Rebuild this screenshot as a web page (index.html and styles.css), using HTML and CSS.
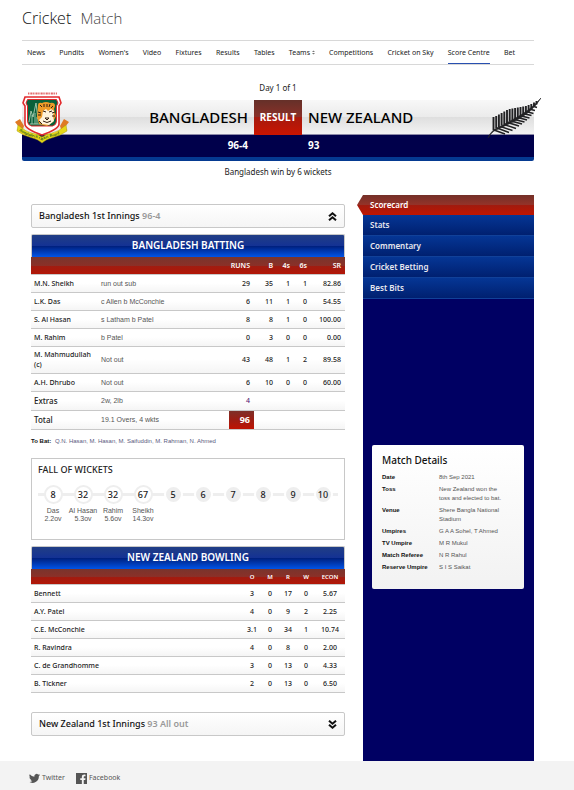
FILE: index.html
```html
<!DOCTYPE html>
<html lang="en">
<head>
<meta charset="utf-8">
<meta name="viewport" content="width=device-width, initial-scale=1">
<title>Cricket Match</title>
<link rel="stylesheet" href="styles.css">
</head>
<body>
<div class="page">
  <header class="site-head">
    <h1 class="site-title">Cricket <span>Match</span></h1>
    <nav class="site-nav" aria-label="Cricket">
      <a href="#">News</a>
      <a href="#">Pundits</a>
      <a href="#">Women's</a>
      <a href="#">Video</a>
      <a href="#">Fixtures</a>
      <a href="#">Results</a>
      <a href="#">Tables</a>
      <a href="#">Teams <svg class="caret" viewBox="0 0 4 6" aria-hidden="true"><path d="M0 2.4 2 .2 4 2.4ZM0 3.6 2 5.8 4 3.6Z"/></svg></a>
      <a href="#">Competitions</a>
      <a href="#">Cricket on Sky</a>
      <a href="#" class="current" aria-current="page">Score Centre</a>
      <a href="#">Bet</a>
    </nav>
  </header>

  <section class="match">
    <p class="match-day">Day 1 of 1</p>
    <div class="board">
      <div class="teams">
        <h2 class="team home">BANGLADESH</h2>
        <div class="result">RESULT</div>
        <h2 class="team away">NEW ZEALAND</h2>
      </div>
      <div class="scores">
        <strong class="home">96-4</strong>
        <strong class="away">93</strong>
      </div>
      <svg class="crest" viewBox="0 0 54 54" aria-hidden="true">
        <path d="M13 2.500h29" stroke="#e36a6a" stroke-width="2" stroke-dasharray="1.4 .9 2.2 .6"/>
        <path d="M0 31 5 28 9 35 7 41 2 39 4 36ZM54 31 49 28 45 35 47 41 52 39 50 36Z" fill="#df7a25"/>
        <path d="M10 6h34l2 6-2 3v18q0 5-17 11-17-6-17-11v-18l-2-3Z" fill="#fff" stroke="#e2292c" stroke-width="1.600"/>
        <path d="M12.500 8.500h29l1.500 3.500-1.500 3v15q0 4-4 5H16.500q-4-1-4-5V15l-1.500-3Z" fill="#08603a" stroke="#e2292c" stroke-width="1"/>
        <path d="M14 31 16 20 18 26 21 12 23 28 25 20 26 33M17 33v-9M20 33V22M22 33v-7M15 33h13" fill="none" stroke="#a9cdb4" stroke-width=".9"/>
        <path d="M23 14q0-3 4-2 4-2 8 0 5-1 5 3l-1 3 2 7-3 6-6 4-8-2-2-7Z" fill="#ec9a28"/>
        <path d="m28 20 3-2 2 2 3-2 3 2-1 5 1 5-5 4-7-1-3-4 3-3Z" fill="#fff3da"/>
        <path d="m25 14 2 2m2-3v3m3-3v3m3-3-1 3m4-1-2 2M23 21l3 1m-3 2h3m14-3-3 1m3 3h-3M28 20l3 1m3 0 3-1M30 27h4l-2 2ZM28 30q4 3 8 0M24 30l3 3" fill="none" stroke="#342014" stroke-width="1"/>
        <path d="M3 34q8 7 14 8 6 1 10 4 4-3 10-4 6-1 14-8l1 6q-7 5-14 6.500-7 1.500-11 5.500-4-4-11-5.500-7-1.500-14-6.500Z" fill="#e7d817" stroke="#a79a13" stroke-width=".5"/>
        <path id="ribbon" d="M4 39.500q7 5 13 6 6 1.500 10 4 4-2.500 10-4 6-1 13-6" fill="none"/>
        <text class="crest-text"><textPath href="#ribbon">Bangladesh Cricket Board</textPath></text>
      </svg>
      <svg class="fern" viewBox="0 0 54 42" aria-hidden="true">
        <path d="M6.500 33V20M9.200 31.500V19M11.900 30V17.500M14.600 28.500V16M17.300 27V14.500M20 26V13M22.700 24.500V12M25.400 23V11.500M28.100 22V11M30.800 20.500V10.500M33.500 19V10M36.200 18V9.500M38.900 16.500V9M41.600 14.500V8M44.300 12.500V7M47 10V5.500M49.500 7.500V4" stroke="#222224" stroke-width="1.900"/>
        <path d="M7 33l11 4M10 31l12 4.500M13.500 29.500l12 4M17 27.500l12 4M20.500 25.500l11.500 3.500M24 24l11 3M27.500 22.500l10 2.500M31 20.500l9 2.500M34.500 19l8 2M38 17l6.500 1.500M41 15l5.500 1.500M44 12.500l4 1M47 9.500l3 1" stroke="#222224" stroke-width="1.500"/>
        <path d="M1 41Q3 36 6.500 33L25 23Q44 13 54 1 45 16 26 25L7 34Q4 36 1 41Z" fill="#222224" stroke="#222224" stroke-width=".6"/>
      </svg>
    </div>
    <p class="outcome">Bangladesh win by 6 wickets</p>
  </section>

  <div class="columns">
    <main class="scorecard">
      <button class="innings" type="button" aria-expanded="true">
        <span>Bangladesh 1st Innings <em>96-4</em></span>
        <svg viewBox="0 0 9 9" aria-hidden="true"><path d="m1 4.300 3.500-3L8 4.300M1 8.300l3.500-3L8 8.300"/></svg>
      </button>

      <table class="stats batting">
        <caption>BANGLADESH BATTING</caption>
        <colgroup><col class="c-name"><col><col class="c-runs"><col class="c-balls"><col class="c-four"><col class="c-four"><col class="c-rate"></colgroup>
        <thead>
          <tr><th></th><th></th><th scope="col">RUNS</th><th scope="col">B</th><th scope="col">4s</th><th scope="col">6s</th><th scope="col">SR</th></tr>
        </thead>
        <tbody>
          <tr><th scope="row">M.N. Sheikh</th><td class="how">run out sub</td><td>29</td><td>35</td><td>1</td><td>1</td><td>82.86</td></tr>
          <tr><th scope="row">L.K. Das</th><td class="how">c Allen b McConchie</td><td>6</td><td>11</td><td>1</td><td>0</td><td>54.55</td></tr>
          <tr><th scope="row">S. Al Hasan</th><td class="how">s Latham b Patel</td><td>8</td><td>8</td><td>1</td><td>0</td><td>100.00</td></tr>
          <tr><th scope="row">M. Rahim</th><td class="how">b Patel</td><td>0</td><td>3</td><td>0</td><td>0</td><td>0.00</td></tr>
          <tr><th scope="row">M. Mahmudullah (c)</th><td class="how">Not out</td><td>43</td><td>48</td><td>1</td><td>2</td><td>89.58</td></tr>
          <tr><th scope="row">A.H. Dhrubo</th><td class="how">Not out</td><td>6</td><td>10</td><td>0</td><td>0</td><td>60.00</td></tr>
        </tbody>
        <tfoot>
          <tr><th scope="row">Extras</th><td class="how">2w, 2lb</td><td class="extras">4</td><td colspan="4"></td></tr>
          <tr><th scope="row">Total</th><td class="how">19.1 Overs, 4 wkts</td><td class="total">96</td><td colspan="4"></td></tr>
        </tfoot>
      </table>

      <p class="to-bat"><b>To Bat:</b> Q.N. Hasan, M. Hasan, M. Saifuddin, M. Rahman, N. Ahmed</p>

      <section class="wickets">
        <h3>FALL OF WICKETS</h3>
        <ol>
          <li class="fallen"><b>8</b><span>Das<br>2.2ov</span></li>
          <li class="fallen"><b>32</b><span>Al Hasan<br>5.3ov</span></li>
          <li class="fallen"><b>32</b><span>Rahim<br>5.6ov</span></li>
          <li class="fallen"><b>67</b><span>Sheikh<br>14.3ov</span></li>
          <li><b>5</b></li>
          <li><b>6</b></li>
          <li><b>7</b></li>
          <li><b>8</b></li>
          <li><b>9</b></li>
          <li><b>10</b></li>
        </ol>
      </section>

      <table class="stats bowling">
        <caption>NEW ZEALAND BOWLING</caption>
        <colgroup><col><col class="c-bowl"><col class="c-bowl"><col class="c-bowl"><col class="c-bowl"><col class="c-econ"></colgroup>
        <thead>
          <tr><th></th><th scope="col">O</th><th scope="col">M</th><th scope="col">R</th><th scope="col">W</th><th scope="col">ECON</th></tr>
        </thead>
        <tbody>
          <tr><th scope="row">Bennett</th><td>3</td><td>0</td><td>17</td><td>0</td><td>5.67</td></tr>
          <tr><th scope="row">A.Y. Patel</th><td>4</td><td>0</td><td>9</td><td>2</td><td>2.25</td></tr>
          <tr><th scope="row">C.E. McConchie</th><td>3.1</td><td>0</td><td>34</td><td>1</td><td>10.74</td></tr>
          <tr><th scope="row">R. Ravindra</th><td>4</td><td>0</td><td>8</td><td>0</td><td>2.00</td></tr>
          <tr><th scope="row">C. de Grandhomme</th><td>3</td><td>0</td><td>13</td><td>0</td><td>4.33</td></tr>
          <tr><th scope="row">B. Tickner</th><td>2</td><td>0</td><td>13</td><td>0</td><td>6.50</td></tr>
        </tbody>
      </table>

      <button class="innings" type="button" aria-expanded="false">
        <span>New Zealand 1st Innings <em>93 All out</em></span>
        <svg viewBox="0 0 9 9" aria-hidden="true"><path d="m1 .7 3.500 3L8 .7M1 4.700l3.500 3L8 4.700"/></svg>
      </button>
    </main>

    <aside class="side">
      <nav class="side-nav" aria-label="Match">
        <a href="#" class="current" aria-current="page">Scorecard</a>
        <a href="#">Stats</a>
        <a href="#">Commentary</a>
        <a href="#">Cricket Betting</a>
        <a href="#">Best Bits</a>
      </nav>
      <section class="details">
        <h3>Match Details</h3>
        <dl>
          <dt>Date</dt><dd>8th Sep 2021</dd>
          <dt>Toss</dt><dd>New Zealand won the toss and elected to bat.</dd>
          <dt>Venue</dt><dd>Shere Bangla National Stadium</dd>
          <dt>Umpires</dt><dd>G A A Sohel, T Ahmed</dd>
          <dt>TV Umpire</dt><dd>M R Mukul</dd>
          <dt>Match Referee</dt><dd>N R Rahul</dd>
          <dt>Reserve Umpire</dt><dd>S I S Saikat</dd>
        </dl>
      </section>
    </aside>
  </div>
</div>

<footer class="site-foot">
  <a href="#"><svg viewBox="0 0 24 20" aria-hidden="true"><path d="M24 2.400a10 10 0 0 1-2.800.8A5 5 0 0 0 23.300.4a10 10 0 0 1-3.100 1.200A4.900 4.900 0 0 0 11.800 6 14 14 0 0 1 1.700.9a4.900 4.900 0 0 0 1.500 6.600A5 5 0 0 1 1 6.900a4.900 4.900 0 0 0 3.900 4.900 5 5 0 0 1-2.200.1 4.900 4.900 0 0 0 4.600 3.400A9.900 9.900 0 0 1 0 17.300 14 14 0 0 0 21.500 5a10 10 0 0 0 2.500-2.600Z"/></svg>Twitter</a>
  <a href="#"><svg viewBox="0 0 22 22" aria-hidden="true"><path d="M0 0h22v22h-6.500v-8h3l.5-3.500h-3.500V8.300c0-1 .5-1.800 2-1.800H19V3.300c-4.500-.8-7.300.6-7.300 4.500v2.700H8.500V14h3.200v8H0Z"/></svg>Facebook</a>
</footer>
</body>
</html>
```
FILE: styles.css
```css
* {
  box-sizing: border-box;
}

body {
  margin: 0;
  background: #fff;
  color: #222;
  font: 8px/12px "Noto Sans", "Open Sans", sans-serif;
}

h1, h2, h3, p, ol, dl, dd {
  margin: 0;
  padding: 0;
}

a {
  color: inherit;
  text-decoration: none;
}

.page {
  padding: 0 40px 0 22px;
}

.site-title {
  height: 40px;
  font: 300 16px/37px "Open Sans", sans-serif;
  color: #111;
}

.site-title span {
  margin-left: 5px;
  font-size: 15px;
  color: #444;
}

.site-nav {
  display: flex;
  justify-content: space-between;
  height: 25px;
  padding: 0 19px 0 5px;
  border: solid #d8d8d8;
  border-width: 1px 0;
  font-size: 7px;
  line-height: 23px;
  white-space: nowrap;
}

.site-nav .current {
  border-bottom: 1px solid #2850b0;
}

.caret {
  width: 3px;
  height: 5px;
  fill: #777;
}

.match {
  text-align: center;
}

.match-day {
  padding: 17px 0 6px;
}

.board {
  position: relative;
  border-bottom: 4px solid #053a91;
  border-radius: 0 0 2px 2px;
  background: #00004b;
}

.teams,
.scores {
  display: grid;
  grid-template-columns: 1fr 48px 1fr;
}

.teams {
  height: 35px;
  border-bottom: 1px solid #8d8aa8;
  background: linear-gradient(#f8f8f8, #ebebeb 49%, #dedede 50%, #f3f3f3);
  line-height: 35px;
}

.team {
  padding: 0 6px;
  font-size: 15px;
  font-weight: 500;
  color: #000;
}

.home {
  text-align: right;
}

.away {
  grid-column: 3;
  text-align: left;
}

.result {
  background: linear-gradient(#653029, #8b3028 49%, #a51a0e 50%, #cb1400);
  font-size: 10px;
  font-weight: 700;
  line-height: 34px;
  color: #fff;
}

.scores {
  height: 22px;
  font-size: 10px;
  line-height: 21px;
  color: #fff;
}

.scores strong {
  padding: 0 6px;
}

.crest {
  position: absolute;
  left: -7px;
  top: -9px;
  width: 54px;
  height: 54px;
}

.crest-text {
  font: italic bold 4px "Liberation Serif", serif;
  fill: #286020;
}

.fern {
  position: absolute;
  right: -7px;
  top: -3px;
  width: 54px;
  height: 42px;
}

.outcome {
  padding-top: 5px;
}

.columns {
  display: grid;
  grid-template-columns: 1fr 171px;
  gap: 18px;
  margin-top: 17px;
}

.scorecard {
  padding: 9px 0 25px 9px;
}

.innings {
  display: flex;
  align-items: center;
  justify-content: space-between;
  width: 100%;
  height: 24px;
  padding: 0 7px;
  border: 1px solid #c8c8c8;
  border-radius: 2px;
  background: linear-gradient(#fff, #f5f5f5);
  font: 500 9px/22px "Noto Sans", sans-serif;
  color: #111;
}

.innings em {
  font-style: normal;
  font-weight: 600;
  color: #999;
}

.innings svg {
  width: 9px;
  height: 9px;
  fill: none;
  stroke: #111;
  stroke-width: 2;
}

.stats {
  width: 100%;
  table-layout: fixed;
  border-spacing: 0;
  font-size: 7px;
  line-height: 10px;
}

.batting {
  margin-top: 6px;
}

.stats caption {
  height: 23px;
  border: 1px solid #c8c8c8;
  border-bottom: 0;
  border-radius: 2px 2px 0 0;
  background: linear-gradient(#213e85, #143294 49%, #001f7c 50%, #0054e8);
  font-size: 10px;
  font-weight: 600;
  line-height: 21px;
  color: #fff;
}

.stats th,
.stats td {
  height: 18px;
  padding: 3px 4px 3px 0;
  border-bottom: 1px solid #c8c8c8;
  text-align: right;
  font-weight: 500;
}

.stats thead tr {
  background: linear-gradient(#79342c, #8b3028 49%, #a01c11 50%, #b51505);
}

.stats thead th {
  font-size: 7px;
  font-weight: 600;
  color: #fff;
}

.stats tbody tr,
.stats tfoot tr {
  background: linear-gradient(#fff 45%, #f4f4f4);
}

.stats tbody th,
.stats tfoot th {
  padding-left: 3px;
  text-align: left;
}

.stats tfoot th {
  height: 19px;
  font-size: 8px;
}

.stats .how {
  padding-left: 3px;
  text-align: left;
  font-family: "Liberation Sans", sans-serif;
  font-weight: 400;
  color: #555;
}

.stats .extras {
  color: #5b2473;
}

.stats .total {
  background: linear-gradient(#7d3029, #9d1d13 50%, #c01302);
  font-size: 9px;
  font-weight: 700;
  color: #fff;
}

.c-name { width: 67px; }
.c-runs { width: 25px; }
.c-balls { width: 23px; }
.c-four { width: 17px; }
.c-rate { width: 34px; }
.c-bowl { width: 18px; }
.c-econ { width: 30px; }

.bowling thead th,
.bowling td {
  padding: 0;
  text-align: center;
}

.bowling thead th {
  height: 16px;
  font-size: 6px;
}

.to-bat {
  padding: 5px 0 11px;
  font: 6px/12px "Liberation Sans", sans-serif;
  color: #5b5b80;
}

.to-bat b {
  margin-right: 2px;
  color: #111;
}

.wickets {
  height: 82px;
  margin-bottom: 6px;
  padding: 5px 6px;
  border: 1px solid #c8c8c8;
}

.wickets h3 {
  font-size: 9px;
  font-weight: 500;
  line-height: 12px;
  color: #222;
}

.wickets ol {
  display: grid;
  grid-template-columns: repeat(10, 1fr);
  margin-top: 9px;
  list-style: none;
  background: linear-gradient(#eee, #eee) 0 8px / 100% 3px no-repeat;
}

.wickets li {
  display: flex;
  flex-direction: column;
  align-items: center;
}

.wickets b {
  width: 19px;
  height: 19px;
  border: 2px solid #fff;
  border-radius: 50%;
  background: #eee;
  font-size: 9px;
  font-weight: 500;
  line-height: 15px;
  text-align: center;
}

.wickets .fallen b {
  border-color: #eee;
  background: #fff;
}

.wickets span {
  margin-top: 3px;
  font: 7px/8px "Liberation Sans", sans-serif;
  color: #555;
  text-align: center;
  white-space: nowrap;
}

.bowling {
  margin-bottom: 19px;
}

.side {
  background: #000063;
}

.side-nav a {
  display: block;
  height: 21px;
  padding-left: 7px;
  border-bottom: 1px solid #114199;
  background: linear-gradient(#053695, #002070);
  font-size: 8px;
  font-weight: 600;
  line-height: 20px;
  color: #e8e8f0;
}

.side-nav .current {
  height: 20px;
  margin-left: -6px;
  padding-left: 13px;
  border: 0;
  background: linear-gradient(#743028, #943329 49%, #a01b0f 50%, #c01500);
  clip-path: polygon(0 50%, 6px 0, 100% 0, 100% 100%, 6px 100%);
  color: #fff;
}

.details {
  margin: 146px 10px 0 9px;
  padding: 9px 10px 17px;
  border-radius: 2px;
  background: linear-gradient(#fff, #f2f2f2);
}

.details h3 {
  margin-bottom: 6px;
  font-size: 10px;
  font-weight: 500;
  line-height: 13px;
  color: #111;
}

.details dl {
  display: grid;
  grid-template-columns: 57px 1fr;
  row-gap: 3px;
  font: 6px/9px "Liberation Sans", sans-serif;
}

.details dt {
  font-weight: 700;
  color: #111;
}

.details dd {
  padding-right: 8px;
  color: #555;
}

.site-foot {
  display: flex;
  gap: 11px;
  height: 29px;
  padding: 11px 29px;
  background: #f3f3f3;
  font-size: 7px;
  line-height: 12px;
  color: #555;
}

.site-foot a {
  display: flex;
  align-items: center;
  gap: 2px;
  height: 12px;
}

.site-foot svg {
  width: 11px;
  height: 11px;
  fill: #555;
}
```
